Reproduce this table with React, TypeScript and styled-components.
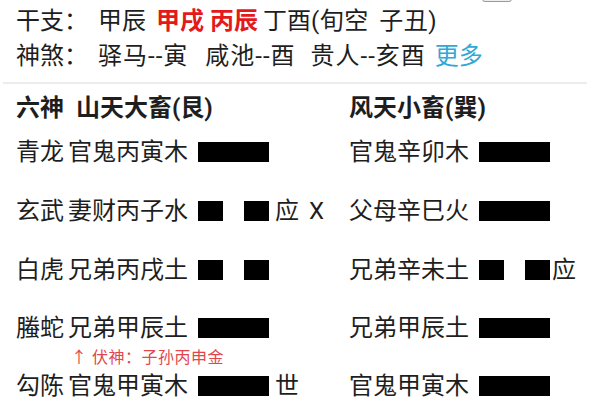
import React from "react";
import styled, { createGlobalStyle } from "styled-components";

const Global = createGlobalStyle`
  html, body { margin: 0; padding: 0; background: #fff; }
  body { font-family: Roboto, "Noto Sans CJK SC", sans-serif; color: #1e1e1e; }
`;

const Page = styled.div`
  position: relative;
  width: 600px;
  height: 400px;
  overflow: hidden;
  background: #fff;
`;

const TopTab = styled.div`
  position: absolute;
  top: -20px;
  left: 482px;
  width: 30px;
  height: 22px;
  border: 1px solid #9a9a9a;
  border-radius: 3px;
  background: #eeeeee;
  box-sizing: border-box;
`;

const Info = styled.div`
  display: flex;
  flex-direction: column;
  padding: 4px 0 0 16px;
`;

const InfoRow = styled.div<{ $h: number }>`
  display: flex;
  align-items: center;
  height: ${(p) => p.$h}px;
  line-height: ${(p) => p.$h}px;
  font-size: 24px;
  white-space: pre;
`;

const Label = styled.span`
  width: 82px;
  flex: none;
`;

const Plain = styled.span<{ $ml?: number }>`
  margin-left: ${(p) => p.$ml ?? 0}px;
`;

const Hot = styled.span`
  color: #e3191c;
  font-weight: 700;
  margin-left: 10px;
`;

const Paren = styled.span`
  letter-spacing: 0.5px;
  word-spacing: 4px;
`;

const Sha = styled.span<{ $ml?: number }>`
  letter-spacing: 1px;
  margin-left: ${(p) => p.$ml ?? 0}px;
`;

const More = styled.span`
  color: #2fa9d6;
  margin-left: 9px;
`;

const Divider = styled.div`
  height: 2px;
  background: #ececec;
  margin: 8px 13px 0 3px;
`;

const Table = styled.div`
  display: grid;
  grid-template-columns: 333px 1fr;
  padding: 10px 0 0 16px;
`;

const Head = styled.div`
  font-size: 24px;
  font-weight: 700;
  height: 28px;
  line-height: 28px;
  white-space: pre;
  margin-bottom: 16px;
`;

const Cell = styled.div<{ $h: number }>`
  height: ${(p) => p.$h}px;
  padding-top: 1px;
  box-sizing: border-box;
  display: flex;
  flex-direction: column;
`;

const Line = styled.div`
  display: flex;
  align-items: center;
  height: 26px;
  line-height: 26px;
  font-size: 24px;
  white-space: pre;
`;

const God = styled.span`
  width: 52px;
  flex: none;
`;

const Yao = styled.span`
  width: 130px;
  flex: none;
`;

const Bar = styled.div`
  display: flex;
  justify-content: space-between;
  width: 71px;
  height: 20px;
  flex: none;
`;

const Seg = styled.div<{ $w: number }>`
  width: ${(p) => p.$w}px;
  height: 100%;
  background: #000;
`;

const Mark = styled.span<{ $gap: number }>`
  margin-left: ${(p) => p.$gap}px;
`;

const Fu = styled.div`
  font-size: 16px;
  letter-spacing: 0.5px;
  color: #e2464c;
  padding-left: 55px;
  height: 20px;
  line-height: 20px;
  margin-top: 7px;
`;

const YaoBar = ({ yin }: { yin?: boolean }) =>
  yin ? (
    <Bar>
      <Seg $w={25} />
      <Seg $w={25} />
    </Bar>
  ) : (
    <Bar>
      <Seg $w={71} />
    </Bar>
  );

type Row = {
  god: string;
  left: string;
  leftYin?: boolean;
  leftMark?: string;
  change?: string;
  right: string;
  rightYin?: boolean;
  rightMark?: string;
  fu?: string;
  h: number;
};

const rows: Row[] = [
  { god: "青龙", left: "官鬼丙寅木", right: "官鬼辛卯木", h: 59 },
  { god: "玄武", left: "妻财丙子水", leftYin: true, leftMark: "应", change: "X", right: "父母辛巳火", h: 59 },
  { god: "白虎", left: "兄弟丙戌土", leftYin: true, right: "兄弟辛未土", rightYin: true, rightMark: "应", h: 58 },
  { god: "螣蛇", left: "兄弟甲辰土", right: "兄弟甲辰土", fu: "↑ 伏神：子孙丙申金", h: 58 },
  { god: "勾陈", left: "官鬼甲寅木", leftMark: "世", right: "官鬼甲寅木", h: 28 },
];

export default function App() {
  return (
    <Page>
      <Global />
      <TopTab />
      <Info>
        <InfoRow $h={34}>
          <Label>干支：</Label>
          <Plain>甲辰</Plain>
          <Hot>甲戌 丙辰</Hot>
          <Plain $ml={5}>丁酉</Plain>
          <Paren>(旬空 子丑)</Paren>
        </InfoRow>
        <InfoRow $h={36}>
          <Label>神煞：</Label>
          <Sha>驿马--寅</Sha>
          <Sha $ml={17}>咸池--酉</Sha>
          <Sha $ml={15}>贵人--亥酉</Sha>
          <More>更多</More>
        </InfoRow>
      </Info>
      <Divider />
      <Table>
        <Head>六神  山天大畜(艮)</Head>
        <Head>风天小畜(巽)</Head>
        {rows.map((r, i) => (
          <React.Fragment key={i}>
            <Cell $h={r.h}>
              <Line>
                <God>{r.god}</God>
                <Yao>{r.left}</Yao>
                <YaoBar yin={r.leftYin} />
                {r.leftMark && <Mark $gap={6}>{r.leftMark}</Mark>}
                {r.change && <Mark $gap={10}>{r.change}</Mark>}
              </Line>
              {r.fu && <Fu>{r.fu}</Fu>}
            </Cell>
            <Cell $h={r.h}>
              <Line>
                <Yao>{r.right}</Yao>
                <YaoBar yin={r.rightYin} />
                {r.rightMark && <Mark $gap={2}>{r.rightMark}</Mark>}
              </Line>
            </Cell>
          </React.Fragment>
        ))}
      </Table>
    </Page>
  );
}
